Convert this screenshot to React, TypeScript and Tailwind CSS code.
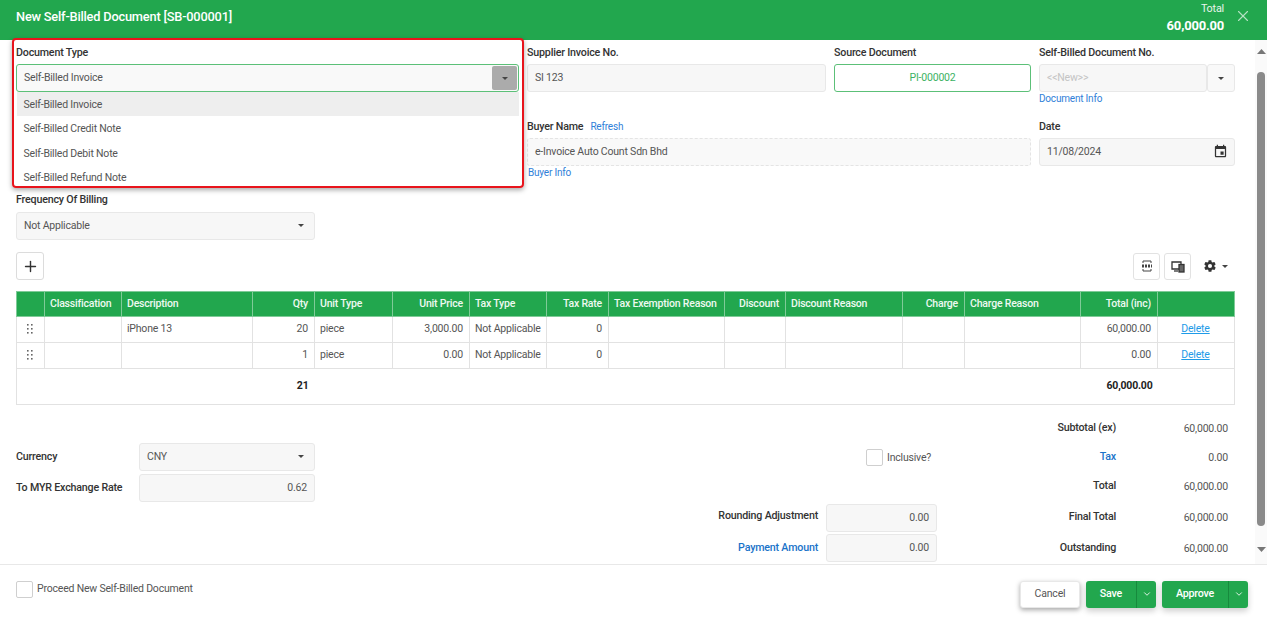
import React from "react";
import { ChevronDown, X, Plus } from "lucide-react";

const Caret = ({ className = "" }: { className?: string }) => (
  <svg width="6" height="3" viewBox="0 0 8 4" className={className}><path d="M0 0h8L4 4z" fill="#444" /></svg>
);

const Label = ({ children, className = "" }: { children: React.ReactNode; className?: string }) => (
  <div className={`h-[16px] leading-[16px] text-[10.7px] font-medium text-[#333] ${className}`}>{children}</div>
);

const fieldCls = "h-[28px] rounded-[3px] border border-[#e8e8e8] bg-[#f7f7f7] text-[10.5px] flex items-center px-[7px] pb-[1px]";

const cols = [
  "w-[28px]", "w-[77px]", "w-[131px]", "w-[62px]", "w-[78px]", "w-[77px]", "w-[77px]", "w-[62px]",
  "w-[116px]", "w-[61px]", "w-[117px]", "w-[62px]", "w-[116px]", "w-[77px]", "w-[77px]",
];

const heads: [string, boolean][] = [
  ["", false], ["Classification", false], ["Description", false], ["Qty", true], ["Unit Type", false],
  ["Unit Price", true], ["Tax Type", false], ["Tax Rate", true], ["Tax Exemption Reason", false], ["Discount", true],
  ["Discount Reason", false], ["Charge", true], ["Charge Reason", false], ["Total (inc)", true], ["", false],
];

const Dots = () => (
  <svg width="6" height="10" viewBox="0 0 6 10" className="mx-auto block">
    {[1, 5, 9].flatMap((y) => [1, 5].map((x) => <rect key={`${x}${y}`} x={x - 1} y={y - 1} width="1.6" height="1.6" fill="#666" />))}
  </svg>
);

const Row = ({ desc, qty, price, total }: { desc: string; qty: string; price: string; total: string }) => {
  const td = "border border-[#e2e2e2] pl-[5px] pr-[6px] pb-[2px] h-[26px] text-[10.5px] whitespace-nowrap";
  const tx = `${td} text-[#555]`;
  return (
    <tr>
      <td className={td}><Dots /></td>
      <td className={td}></td>
      <td className={tx}>{desc}</td>
      <td className={`${tx} text-right`}>{qty}</td>
      <td className={tx}>piece</td>
      <td className={`${tx} text-right`}>{price}</td>
      <td className={tx}>Not Applicable</td>
      <td className={`${tx} text-right`}>0</td>
      <td className={td}></td>
      <td className={td}></td>
      <td className={td}></td>
      <td className={td}></td>
      <td className={td}></td>
      <td className={`${tx} text-right`}>{total}</td>
      <td className={`${td} text-center text-[#1e9be8] underline`}>Delete</td>
    </tr>
  );
};

const Summary = ({ label, value, blue, mt }: { label: string; value: string; blue?: boolean; mt: string }) => (
  <div className={`flex items-center h-[16px] ${mt}`}>
    <div className={`w-[76px] text-right text-[10.7px] font-medium ${blue ? "text-[#1a73c9]" : "text-[#333]"}`}>{label}</div>
    <div className="w-[112px] text-right text-[10.5px] text-[#555] pt-[2px]">{value}</div>
  </div>
);

export default function App() {
  return (
    <div className="w-[1267px] h-[623px] flex flex-col overflow-hidden bg-white relative font-['Roboto',sans-serif] tracking-[-0.2px]">
      <header className="h-[40px] shrink-0 bg-[#22a74e] flex items-center text-white pl-[16px] pr-[15px]">
        <div className="text-[12.8px] font-medium flex-1 -mt-[7px]">New Self-Billed Document [SB-000001]</div>
        <div className="text-right mr-[10px] -mt-[3px]">
          <div className="text-[10.8px] leading-[14px] text-[#e8f5ec]">Total</div>
          <div className="text-[13px] leading-[18px] font-bold mt-[1px]">60,000.00</div>
        </div>
        <X size={18} strokeWidth={1.5} className="text-[#b5e2c4] -mt-[8px]" />
      </header>

      <main className="flex-1 min-h-0 flex">
        <div className="flex-1 min-w-0 overflow-hidden pl-[16px] pr-[20px]">
          <div className="grid grid-cols-[503px_299px_197px_196px] gap-x-[8px] pt-[5px]">
            <div>
              <Label>Document Type</Label>
              <div className="mt-[3px] h-[28px] rounded-[3px] border border-[#5cc078] bg-[#f9f9f9] flex items-center justify-between pl-[7px] pr-[1px] text-[10.5px] text-[#555]">
                <span className="-mt-[1px]">Self-Billed Invoice</span>
                <span className="w-[25px] h-[24px] rounded-[2px] bg-[#ababab] flex items-center justify-center"><Caret /></span>
              </div>
            </div>
            <div>
              <Label>Supplier Invoice No.</Label>
              <div className={`mt-[3px] ${fieldCls} text-[#555]`}>SI 123</div>
            </div>
            <div>
              <Label>Source Document</Label>
              <div className="mt-[3px] h-[28px] rounded-[3px] border border-[#5cc078] bg-white flex items-center justify-center text-[10.5px] text-[#3cb264]">PI-000002</div>
            </div>
            <div>
              <Label>Self-Billed Document No.</Label>
              <div className="mt-[3px] flex">
                <div className={`${fieldCls} flex-1 text-[#c4c4c4]`}>&lt;&lt;New&gt;&gt;</div>
                <div className="w-[28px] h-[28px] rounded-[3px] border border-[#e8e8e8] bg-[#f9f9f9] flex items-center justify-center"><Caret /></div>
              </div>
              <div className="text-[10px] leading-[14px] text-[#2f80d8] mt-[0px]">Document Info</div>
            </div>
          </div>

          <div className="grid grid-cols-[503px_504px_196px] gap-x-[8px] mt-[13px]">
            <div></div>
            <div>
              <div className="flex items-center gap-[7px]">
                <Label>Buyer Name</Label>
                <span className="text-[10px] leading-[16px] text-[#2f80d8]">Refresh</span>
              </div>
              <div className="mt-[3px] h-[28px] rounded-[3px] border border-dashed border-[#e4e4e4] bg-[#f9f9f9] flex items-center px-[7px] pb-[1px] text-[10.5px] text-[#555]">e-Invoice Auto Count Sdn Bhd</div>
              <div className="text-[10px] leading-[14px] text-[#2f80d8] pl-[1px]">Buyer Info</div>
            </div>
            <div>
              <Label>Date</Label>
              <div className={`mt-[3px] ${fieldCls} text-[#555] justify-between !pr-[6px]`}>
                <span>11/08/2024</span>
                <svg width="15" height="15" viewBox="0 0 24 24" fill="#333"><path d="M17 12h-5v5h5v-5zM16 1v2H8V1H6v2H5c-1.110 0-1.990.9-1.990 2L3 19c0 1.100.89 2 2 2h14c1.100 0 2-.9 2-2V5c0-1.100-.9-2-2-2h-1V1h-2zm3 18H5V8h14v11z" /></svg>
              </div>
            </div>
          </div>

          <div className="w-[299px] mt-[12px]">
            <Label>Frequency Of Billing</Label>
            <div className={`mt-[4px] ${fieldCls} text-[#555] justify-between !pr-[10px]`}>
              <span>Not Applicable</span>
              <Caret />
            </div>
          </div>

          <div className="flex items-center justify-between mt-[12px] h-[28px] w-[1219px]">
            <div className="w-[28px] h-[28px] rounded-[3px] border border-[#dcdcdc] bg-white flex items-center justify-center">
              <Plus size={17} strokeWidth={2} className="text-[#333]" />
            </div>
            <div className="flex items-center gap-[4px] pr-[7px]">
              <div className="w-[27px] h-[27px] rounded-[3px] border border-[#e2e2e2] bg-white flex items-center justify-center">
                <svg width="14" height="14" viewBox="0 0 14 14" fill="none" stroke="#444" strokeWidth="1">
                  <path d="M3 4V2h8v2M3 10v2h8v-2" />
                  <path d="M2 7h10" strokeWidth="3" strokeDasharray="2 1" />
                </svg>
              </div>
              <div className="w-[27px] h-[27px] rounded-[3px] border border-[#e2e2e2] bg-white flex items-center justify-center">
                <svg width="14" height="13" viewBox="0 0 14 13" fill="none" stroke="#333" strokeWidth="1.3">
                  <path d="M8 9H1V2h9v2" />
                  <rect x="8" y="4.500" width="5" height="7.500" fill="#666" />
                  <path d="M3 11h4" />
                </svg>
              </div>
              <div className="flex items-center gap-[5px] ml-[8px]">
                <svg width="14" height="14" viewBox="0 0 24 24" fill="#333">
                  <path d="M19.400 13c.1-.3.1-.7.1-1s0-.7-.1-1l2.100-1.600c.2-.2.2-.4.1-.6l-2-3.500c-.1-.2-.4-.3-.6-.2l-2.500 1a7.300 7.300 0 0 0-1.700-1l-.4-2.600A.5.5 0 0 0 14 2h-4c-.2 0-.5.2-.5.4l-.4 2.700c-.6.2-1.200.6-1.700 1l-2.500-1c-.2-.1-.5 0-.6.2l-2 3.500c-.1.2-.1.4.1.6L4.500 11c0 .3-.1.7-.1 1s0 .7.1 1l-2.100 1.600c-.2.2-.2.4-.1.6l2 3.500c.1.2.4.3.6.2l2.500-1c.5.4 1.100.8 1.700 1l.4 2.700c0 .2.300.4.500.4h4c.2 0 .5-.2.5-.4l.4-2.700c.6-.2 1.200-.6 1.700-1l2.500 1c.2.1.5 0 .6-.2l2-3.500c.1-.2.1-.4-.1-.6zM12 15.500a3.500 3.500 0 1 1 0-7 3.500 3.500 0 0 1 0 7z" />
                </svg>
                <Caret />
              </div>
            </div>
          </div>

          <table className="table-fixed border-collapse w-[1219px] mt-[11px]">
            <colgroup>{cols.map((c, i) => <col key={i} className={c} />)}</colgroup>
            <thead>
              <tr>
                {heads.map(([h, right], i) => (
                  <th key={i} className={`bg-[#22a74e] border border-[#7fcb98] pl-[5px] pr-[6px] h-[25px] text-[10.5px] font-medium text-[#eef9f1] whitespace-nowrap ${right ? "text-right" : "text-left"}`}>{h}</th>
                ))}
              </tr>
            </thead>
            <tbody>
              <Row desc="iPhone 13" qty="20" price="3,000.00" total="60,000.00" />
              <Row desc="" qty="1" price="0.00" total="0.00" />
              <tr>
                <td colSpan={4} className="border-l border-b border-[#e2e2e2] h-[36px] pb-[2px] text-right text-[10.5px] font-bold text-[#222] pr-[6px]">21</td>
                <td colSpan={9} className="border-b border-[#e2e2e2]"></td>
                <td className="border-b border-[#e2e2e2] pb-[2px] text-right text-[10.5px] font-bold text-[#222] pr-[5px]">60,000.00</td>
                <td className="border-r border-b border-[#e2e2e2]"></td>
              </tr>
            </tbody>
          </table>

          <div className="flex mt-[13px]">
            <div className="w-[299px] pt-[25px]">
              <div className="flex items-center">
                <div className="w-[123px] text-[10.7px] font-medium text-[#333]">Currency</div>
                <div className={`flex-1 ${fieldCls} text-[#555] justify-between !pr-[10px]`}><span>CNY</span><Caret /></div>
              </div>
              <div className="flex items-center mt-[3px]">
                <div className="w-[123px] text-[10.7px] font-medium text-[#333]">To MYR Exchange Rate</div>
                <div className={`flex-1 ${fieldCls} text-[#555] justify-end`}>0.62</div>
              </div>
            </div>
            <div className="w-[622px] pt-[31px]">
              <div className="flex items-center justify-end h-[17px] gap-[4px] pr-[4px]">
                <div className="w-[17px] h-[17px] rounded-[2px] border border-[#cfcfcf] bg-white"></div>
                <span className="text-[10.5px] text-[#555] w-[46px]">Inclusive?</span>
              </div>
              <div className="flex items-center justify-end mt-[38px] gap-[8px]">
                <span className="text-[10.7px] font-medium text-[#333] -mt-[4px]">Rounding Adjustment</span>
                <div className={`w-[111px] ${fieldCls} !pb-0 text-[#555] justify-end`}>0.00</div>
              </div>
              <div className="flex items-center justify-end mt-[2px] gap-[8px]">
                <span className="text-[10.7px] font-medium text-[#1a73c9]">Payment Amount</span>
                <div className={`w-[111px] ${fieldCls} !pb-0 text-[#555] justify-end`}>0.00</div>
              </div>
            </div>
            <div className="pl-[103px] w-[291px] shrink-0">
              <Summary label="Subtotal (ex)" value="60,000.00" mt="mt-[2px]" />
              <Summary label="Tax" value="0.00" blue mt="mt-[13px]" />
              <Summary label="Total" value="60,000.00" mt="mt-[13px]" />
              <Summary label="Final Total" value="60,000.00" mt="mt-[15px]" />
              <Summary label="Outstanding" value="60,000.00" mt="mt-[15px]" />
            </div>
          </div>
        </div>

        <div className="w-[12px] shrink-0 bg-[#fafafa] flex flex-col items-center">
          <svg width="9" height="5" viewBox="0 0 9 5" className="mt-[9px]"><path d="M0 5h9L4.500 0z" fill="#777" /></svg>
          <div className="w-[8px] h-[454px] mt-[18px] rounded-[4px] bg-[#8a8a8a]"></div>
          <svg width="9" height="5" viewBox="0 0 9 5" className="mt-[21px]"><path d="M0 0h9L4.500 5z" fill="#777" /></svg>
        </div>
      </main>

      <footer className="h-[59px] shrink-0 border-t border-[#e8e8e8] bg-white flex items-center pl-[16px] pr-[19px]">
        <div className="flex flex-1 items-center mb-[10px]">
          <div className="w-[17px] h-[17px] rounded-[2px] border border-[#cfcfcf] bg-white"></div>
          <span className="ml-[4px] text-[10.5px] text-[#555]">Proceed New Self-Billed Document</span>
        </div>
        <button className="w-[60px] h-[27px] rounded-[3px] bg-white border border-[#e8e8e8] shadow-[0_2px_5px_rgba(0,0,0,0.35)] text-[10.5px] text-[#555]">Cancel</button>
        <div className="ml-[6px] flex h-[27px] rounded-[3px] bg-[#22a74e] shadow-[0_3px_6px_rgba(0,0,0,0.2)] text-white text-[10.7px] font-medium">
          <span className="w-[51px] flex items-center justify-center border-r border-[#178a3d]">Save</span>
          <span className="w-[19px] flex items-center justify-center"><ChevronDown size={10} /></span>
        </div>
        <div className="ml-[6px] flex h-[27px] rounded-[3px] bg-[#22a74e] shadow-[0_3px_6px_rgba(0,0,0,0.2)] text-white text-[10.7px] font-medium">
          <span className="w-[67px] flex items-center justify-center border-r border-[#178a3d]">Approve</span>
          <span className="w-[19px] flex items-center justify-center"><ChevronDown size={10} /></span>
        </div>
      </footer>

      <div className="absolute left-[17px] top-[92px] w-[502px] h-[93px] bg-white overflow-hidden text-[10.5px] text-[#555]">
        <div className="h-[24px] bg-[#eeeeee] flex items-center px-[6.500px] pt-[2px]">Self-Billed Invoice</div>
        <div className="h-[24.500px] flex items-center px-[6.500px] pt-[2px]">Self-Billed Credit Note</div>
        <div className="h-[24.500px] flex items-center px-[6.500px] pt-[2px]">Self-Billed Debit Note</div>
        <div className="h-[24.500px] flex items-center px-[6.500px] pt-[2px]">Self-Billed Refund Note</div>
      </div>
      <div className="absolute left-[12px] top-[38px] w-[512px] h-[150px] rounded-[4px] border-[2px] border-[#e8141c] shadow-[0_2px_5px_rgba(0,0,0,0.35)] pointer-events-none"></div>
    </div>
  );
}
